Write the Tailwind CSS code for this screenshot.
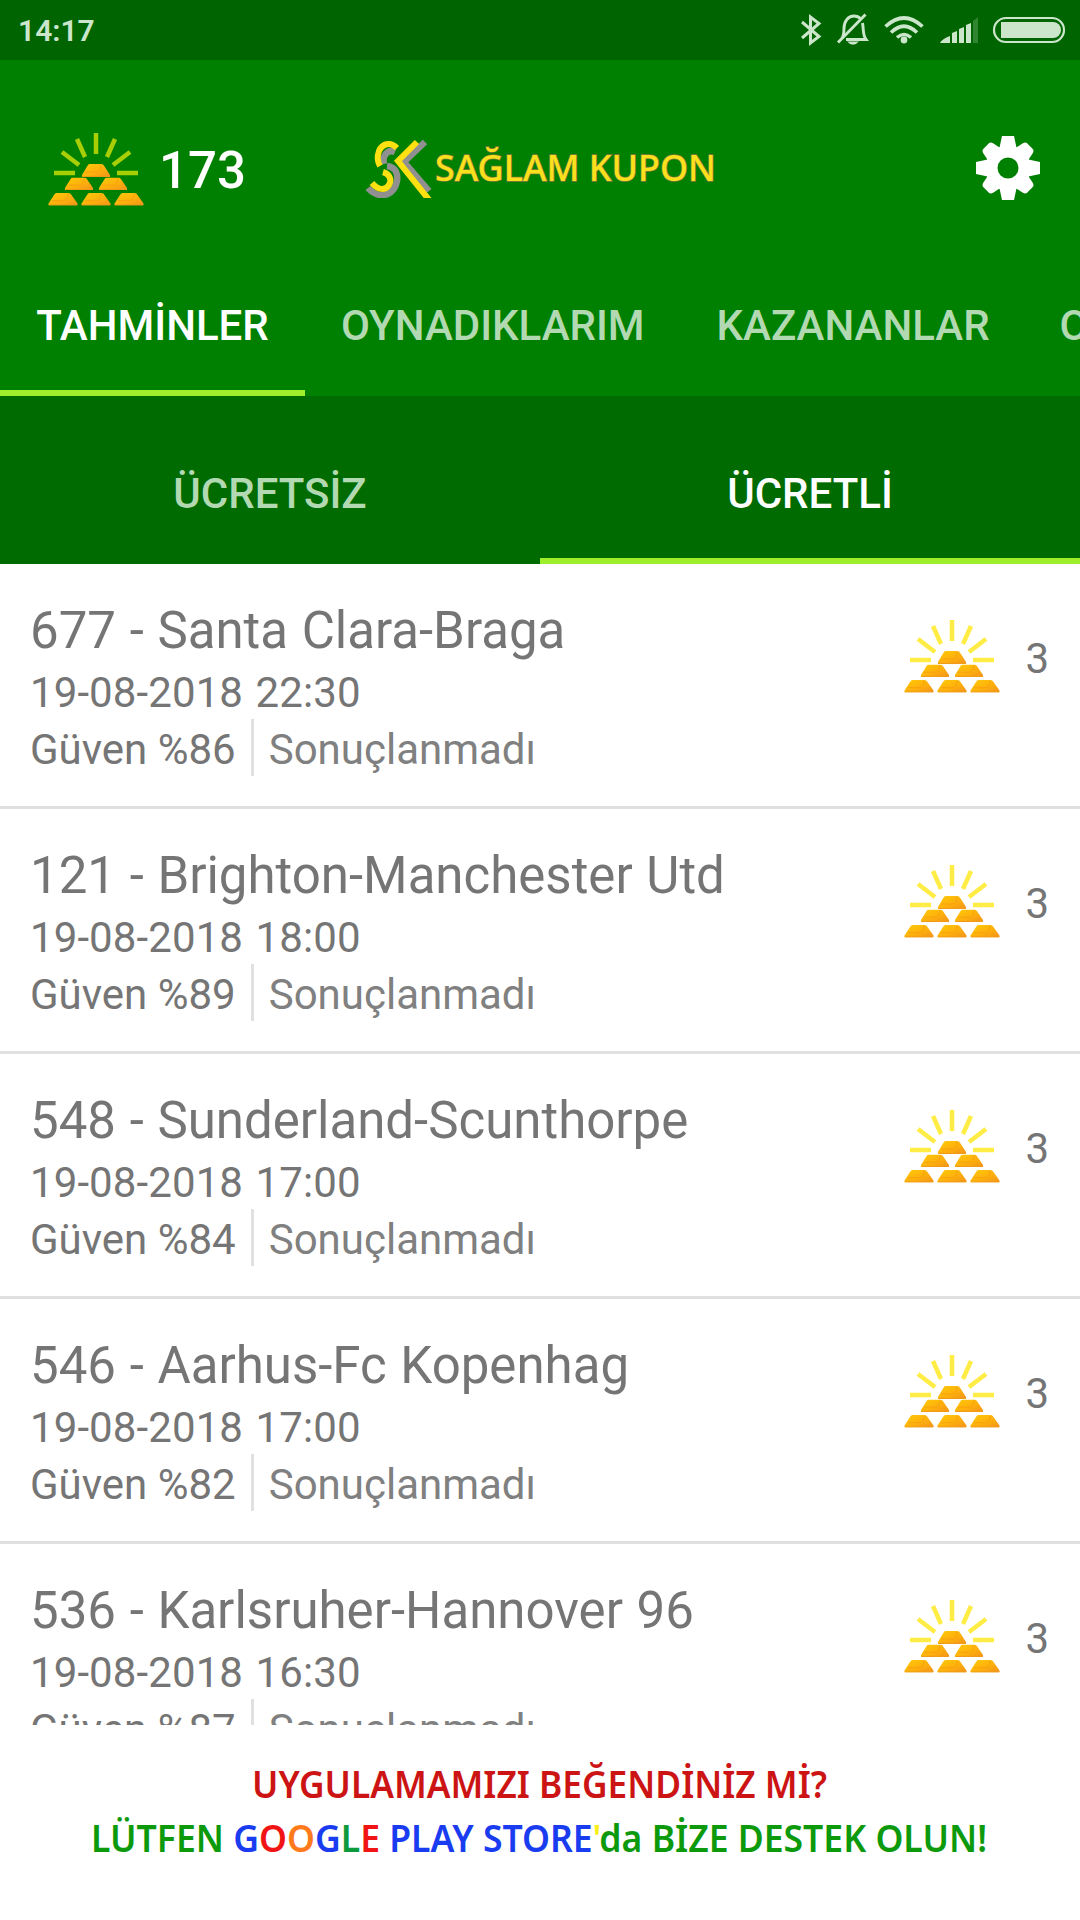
<!DOCTYPE html>
<html lang="tr">
<head>
    <meta charset="UTF-8">
    <meta name="viewport" content="width=device-width, initial-scale=1.0">
    <title>Sağlam Kupon</title>
    <script src="https://cdn.jsdelivr.net/npm/@tailwindcss/browser@4"></script>
</head>
<body class="bg-white font-['Roboto',sans-serif] text-[#757575]">

    <!-- Shared icons -->
    <svg class="absolute h-0 w-0">
        <defs>
            <linearGradient id="goldFill" x1="0" y1="0" x2="1" y2="1">
                <stop offset="0" stop-color="#ffcb08"/>
                <stop offset="0.55" stop-color="#fdb00c"/>
                <stop offset="1" stop-color="#f2921c"/>
            </linearGradient>
            <symbol id="bar" viewBox="0 0 30 13" preserveAspectRatio="none">
                <path d="M8.500 0h12q2 0 3 2l6 9q.5 2-.5 2H1q-1 0-.5-2l5.500-9q1-2 2.500-2z" fill="url(#goldFill)"/>
                <path d="M20 1q0 6-4 7H4" fill="none" stroke="#f8a010" stroke-width="1"/>
                <path d="M1 12.500h28" stroke="#ef9a18" stroke-width="1"/>
            </symbol>
            <symbol id="gold" viewBox="0 0 96 74">
                <path d="M48 1v21M29 7l8 18M67 7l-8 18M14 20l17 13M82 20L65 33M6 41h21M69 41h21" stroke="currentColor" stroke-width="4.500"/>
                <use href="#bar" x="33.500" y="32" width="29" height="13"/>
                <use href="#bar" x="16.500" y="45.500" width="29" height="12.500"/>
                <use href="#bar" x="50.500" y="45.500" width="29" height="12.500"/>
                <use href="#bar" x="0" y="61" width="30" height="12.500"/>
                <use href="#bar" x="33" y="61" width="30" height="12.500"/>
                <use href="#bar" x="66" y="61" width="30" height="12.500"/>
            </symbol>
        </defs>
    </svg>

    <div class="flex h-[1920px] w-[1080px] flex-col overflow-hidden">

        <!-- Status bar -->
        <div class="flex h-[60px] shrink-0 items-center justify-between bg-[#006400] pl-[18px] text-[#cce6cc]">
            <span class="pt-0.5 text-[30px] font-semibold leading-none">14:17</span>
            <svg class="h-[60px] w-[300px]" viewBox="0 0 300 60" fill="none" stroke="currentColor">
                <path d="M22 22l17 14.500-8.500 6.500V17l8.500 6.500L22 38" stroke-width="3"/>
                <path d="M61 39.500c3-3 3-7 3-11 0-7 4-12.500 10-12.500 3 0 5 1 7 3M82.500 23c1.500 8 0 12 3.500 16.500H66M58 42.500l27.500-28" stroke-width="2.900"/>
                <path d="M67 41.500h12q-6 6.500-12 0z" fill="currentColor" stroke="none"/>
                <path d="M105.500 26.500q18.500-17 37 0M111 32.500q13-12.500 26 0M117 37.500q7-6 14 0" stroke-width="3.600"/>
                <circle cx="124" cy="40" r="3.400" fill="currentColor" stroke="none"/>
                <path d="M160 43q2-4 10-7v7zM172 43v-10l5-2v12zM179 43V29l5-2v16zM186 43V25l5-2v20z" fill="currentColor" stroke="none"/>
                <path d="M193 43V21l5-4v26z" fill="#2f8530" stroke="none"/>
                <rect x="214" y="18" width="70" height="24" rx="12" stroke-width="2.200"/>
                <path d="M221 22h52a8 8 0 0 1 0 16h-52z" fill="currentColor" stroke="none"/>
            </svg>
        </div>

        <!-- App header -->
        <header class="flex h-[216px] shrink-0 items-start bg-[#008000] pl-12 pr-10 pt-[72px]">
            <div class="flex w-[312px] shrink-0 items-start gap-[15px]">
                <svg class="h-[74px] w-24 text-[#a8cf05]"><use href="#gold"/></svg>
                <span class="pt-[9px] text-[51px] font-medium leading-[60px] text-white">173</span>
            </div>
            <svg class="h-[66px] w-[380px] shrink-0" viewBox="0 2 380 66">
                <g fill="none" stroke="#909090" stroke-width="6.500">
                    <path d="M35 22C28 19 22 25 24 34M27 36C36 37 38 44 37 51C35 61 28 66 20 65Q13 64 8 58"/>
                    <path d="M65 12L44 32l25 29"/>
                </g>
                <g fill="none" stroke="#ffe010" stroke-width="6">
                    <path d="M37 18C30 11 22 14 19 21Q16 29 20 36M23 42C30 44 32 50 29 55C25 61 18 60 12 53"/>
                    <path d="M57 12L38 31l32 40"/>
                </g>
                <text x="75" y="51" textLength="281" lengthAdjust="spacingAndGlyphs" class="fill-[#fbe01c] stroke-[#8a7a3c] stroke-[1.500px] font-['Noto_Sans',sans-serif] text-[37px] font-medium [paint-order:stroke]">SAĞLAM KUPON</text>
            </svg>
            <svg class="ml-auto mt-1 h-16 w-16 shrink-0" viewBox="-32 -32 64 64" fill="white">
                <path d="M-6-32H6L9-18H-9zM-6 32H6L9 18H-9zM-32-6V6L-18 9V-9zM32-6V6L18 9V-9z"/>
                <path transform="rotate(45)" d="M-4-31H4Q6-31 7-28L9-18H-9l2-10q1-3 3-3zM-4 31H4Q6 31 7 28L9 18H-9l2 10q1 3 3 3zM-31-4V4Q-31 6-28 7L-18 9V-9l-10 2q-3 1-3 3zM31-4V4Q31 6 28 7L18 9V-9l10 2q3 1 3 3z"/>
                <circle r="16.500" fill="none" stroke="white" stroke-width="12"/>
            </svg>
        </header>

        <!-- Main tabs -->
        <nav class="flex h-[120px] shrink-0 overflow-hidden bg-[#008000] text-[42px] font-medium leading-[50px] text-[#b2d9b2]">
            <a class="w-[305px] shrink-0 border-b-[6px] border-[#9eee2b] pt-[25px] text-center text-white">TAHMİNLER</a>
            <a class="shrink-0 px-9 pt-[25px]">OYNADIKLARIM</a>
            <a class="shrink-0 px-9 pt-[25px]">KAZANANLAR</a>
            <a class="shrink-0 pl-[34px] pt-[25px]">O</a>
        </nav>

        <!-- Sub tabs -->
        <nav class="grid h-[168px] shrink-0 grid-cols-2 bg-[#006b00] text-center text-[42px] font-medium leading-[50px]">
            <a class="pt-[73px] text-[#b2d9b2]">ÜCRETSİZ</a>
            <a class="border-b-[6px] border-[#9eee2b] pt-[73px] text-white">ÜCRETLİ</a>
        </nav>

        <!-- Predictions -->
        <main class="h-[1161px] shrink-0 overflow-hidden">
            <div class="flex h-[245px] justify-between border-b-[3px] border-[#e0e0e0] pl-[30px] pr-[31px] pt-[37px]">
                <div>
                    <h2 class="text-[51px] leading-[60px] [word-spacing:1px]">677 - Santa Clara-Braga</h2>
                    <p class="mt-[7px] text-[42px] leading-[50px] tracking-[0.1px] [word-spacing:2px]">19-08-2018 22:30</p>
                    <div class="mt-px flex h-[57px] text-[42px] leading-[62px]">
                        <span class="border-r-[3px] border-[#e0e0e0] pr-[15px]">Güven %86</span>
                        <span class="pl-[15px] text-[#808080]">Sonuçlanmadı</span>
                    </div>
                </div>
                <div class="flex gap-[25px] pt-[18px]">
                    <svg class="h-[74px] w-24 text-[#ffec45]"><use href="#gold"/></svg>
                    <span class="pt-[15px] text-[42px] leading-[50px]">3</span>
                </div>
            </div>
            <div class="flex h-[245px] justify-between border-b-[3px] border-[#e0e0e0] pl-[30px] pr-[31px] pt-[37px]">
                <div>
                    <h2 class="text-[51px] leading-[60px] [word-spacing:1px]">121 - Brighton-Manchester Utd</h2>
                    <p class="mt-[7px] text-[42px] leading-[50px] tracking-[0.1px] [word-spacing:2px]">19-08-2018 18:00</p>
                    <div class="mt-px flex h-[57px] text-[42px] leading-[62px]">
                        <span class="border-r-[3px] border-[#e0e0e0] pr-[15px]">Güven %89</span>
                        <span class="pl-[15px] text-[#808080]">Sonuçlanmadı</span>
                    </div>
                </div>
                <div class="flex gap-[25px] pt-[18px]">
                    <svg class="h-[74px] w-24 text-[#ffec45]"><use href="#gold"/></svg>
                    <span class="pt-[15px] text-[42px] leading-[50px]">3</span>
                </div>
            </div>
            <div class="flex h-[245px] justify-between border-b-[3px] border-[#e0e0e0] pl-[30px] pr-[31px] pt-[37px]">
                <div>
                    <h2 class="text-[51px] leading-[60px] [word-spacing:1px]">548 - Sunderland-Scunthorpe</h2>
                    <p class="mt-[7px] text-[42px] leading-[50px] tracking-[0.1px] [word-spacing:2px]">19-08-2018 17:00</p>
                    <div class="mt-px flex h-[57px] text-[42px] leading-[62px]">
                        <span class="border-r-[3px] border-[#e0e0e0] pr-[15px]">Güven %84</span>
                        <span class="pl-[15px] text-[#808080]">Sonuçlanmadı</span>
                    </div>
                </div>
                <div class="flex gap-[25px] pt-[18px]">
                    <svg class="h-[74px] w-24 text-[#ffec45]"><use href="#gold"/></svg>
                    <span class="pt-[15px] text-[42px] leading-[50px]">3</span>
                </div>
            </div>
            <div class="flex h-[245px] justify-between border-b-[3px] border-[#e0e0e0] pl-[30px] pr-[31px] pt-[37px]">
                <div>
                    <h2 class="text-[51px] leading-[60px] [word-spacing:1px]">546 - Aarhus-Fc Kopenhag</h2>
                    <p class="mt-[7px] text-[42px] leading-[50px] tracking-[0.1px] [word-spacing:2px]">19-08-2018 17:00</p>
                    <div class="mt-px flex h-[57px] text-[42px] leading-[62px]">
                        <span class="border-r-[3px] border-[#e0e0e0] pr-[15px]">Güven %82</span>
                        <span class="pl-[15px] text-[#808080]">Sonuçlanmadı</span>
                    </div>
                </div>
                <div class="flex gap-[25px] pt-[18px]">
                    <svg class="h-[74px] w-24 text-[#ffec45]"><use href="#gold"/></svg>
                    <span class="pt-[15px] text-[42px] leading-[50px]">3</span>
                </div>
            </div>
            <div class="flex h-[245px] justify-between border-b-[3px] border-[#e0e0e0] pl-[30px] pr-[31px] pt-[37px]">
                <div>
                    <h2 class="text-[51px] leading-[60px] [word-spacing:1px]">536 - Karlsruher-Hannover 96</h2>
                    <p class="mt-[7px] text-[42px] leading-[50px] tracking-[0.1px] [word-spacing:2px]">19-08-2018 16:30</p>
                    <div class="mt-px flex h-[57px] text-[42px] leading-[62px]">
                        <span class="border-r-[3px] border-[#e0e0e0] pr-[15px]">Güven %87</span>
                        <span class="pl-[15px] text-[#808080]">Sonuçlanmadı</span>
                    </div>
                </div>
                <div class="flex gap-[25px] pt-[18px]">
                    <svg class="h-[74px] w-24 text-[#ffec45]"><use href="#gold"/></svg>
                    <span class="pt-[15px] text-[42px] leading-[50px]">3</span>
                </div>
            </div>
        </main>

        <!-- Rating banner -->
        <footer class="h-[195px] shrink-0 bg-white">
            <svg class="h-[195px] w-[1080px] font-['Noto_Sans',sans-serif] text-[38px] font-semibold" viewBox="0 0 1080 195">
                <text x="252" y="73" textLength="575" lengthAdjust="spacingAndGlyphs" class="fill-[#cc1414]">UYGULAMAMIZI BEĞENDİNİZ Mİ?</text>
                <text x="91" y="127" textLength="896" lengthAdjust="spacingAndGlyphs" class="fill-[#0c9a0c]">LÜTFEN <tspan class="fill-[#1a3cf0]">G</tspan><tspan class="fill-[#f01414]">O</tspan><tspan class="fill-[#ff7a1a]">O</tspan><tspan class="fill-[#1a3cf0]">G</tspan><tspan class="fill-[#0c9a3c]">L</tspan><tspan class="fill-[#f01414]">E</tspan> <tspan class="fill-[#1a3cf0]">PLAY STORE</tspan><tspan class="fill-[#f8f01a]">'</tspan>da BİZE DESTEK OLUN!</text>
            </svg>
        </footer>
    </div>
</body>
</html>
